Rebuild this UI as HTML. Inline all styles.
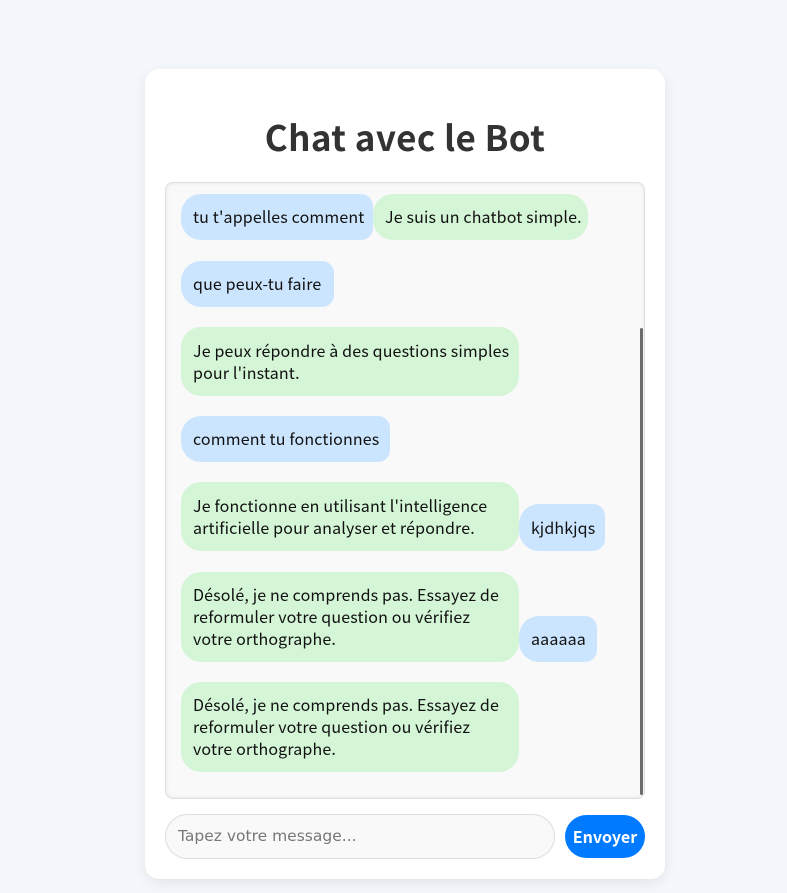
<!DOCTYPE html>
<html><head><meta charset="utf-8"><style>
*{box-sizing:border-box;margin:0;padding:0}
body{width:787px;height:893px;background:#f4f7fb;font-family:"Noto Sans CJK SC","Liberation Sans",sans-serif;position:relative;overflow:hidden}
.card{position:absolute;left:145px;top:69px;width:520px;height:810px;background:#fff;border-radius:14px;box-shadow:0 4px 14px rgba(0,0,0,0.08)}
h1{position:absolute;left:145px;top:111px;width:520px;text-align:center;font-size:35px;font-weight:700;color:#333;line-height:52px;letter-spacing:0.4px}
.box{position:absolute;left:165px;top:182px;width:480px;height:617px;background:#f9f9f9;border:1px solid #ddd;border-radius:8px;box-shadow:inset 0 0 4px rgba(0,0,0,0.08)}
.sb{position:absolute;left:640px;top:328px;width:3px;height:467px;background:#6b6b6b;border-radius:2px}
.b{position:absolute;font-size:16px;line-height:22px;color:#111;padding:0 12px 2px;display:flex;align-items:center;white-space:nowrap;letter-spacing:0.15px}
.u{background:#cce5ff;border-radius:20px 12px 12px 20px}
.g{background:#d4f5d6;border-radius:20px}
.in{position:absolute;left:165px;top:814px;width:390px;height:45px;border:1px solid #ddd;border-radius:23px;background:#f9f9f9;font-family:"DejaVu Sans",sans-serif;font-size:15.5px;color:#777;padding-left:12px;line-height:43px}
.btn{position:absolute;left:565px;top:815px;width:80px;height:43px;background:#007bff;border-radius:22px;color:#fff;font-weight:700;font-size:16px;text-align:center;line-height:42px}
</style></head><body>
<div class="card"></div>
<h1>Chat avec le Bot</h1>
<div class="box"></div>
<div class="b u" style="left:181px;top:194px;width:192px;height:46px">tu t'appelles comment</div>
<div class="b g" style="left:373px;top:194px;width:215px;height:46px">Je suis un chatbot simple.</div>
<div class="b u" style="left:181px;top:261px;width:153px;height:46px">que peux-tu faire</div>
<div class="b g" style="left:181px;top:327px;width:338px;height:69px">Je peux répondre à des questions simples<br>pour l'instant.</div>
<div class="b u" style="left:181px;top:416px;width:209px;height:46px">comment tu fonctionnes</div>
<div class="b g" style="left:181px;top:482px;width:338px;height:69px">Je fonctionne en utilisant l'intelligence<br>artificielle pour analyser et répondre.</div>
<div class="b u" style="left:519px;top:504px;width:86px;height:47px">kjdhkjqs</div>
<div class="b g" style="left:181px;top:572px;width:338px;height:90px">Désolé, je ne comprends pas. Essayez de<br>reformuler votre question ou vérifiez<br>votre orthographe.</div>
<div class="b u" style="left:519px;top:616px;width:78px;height:46px">aaaaaa</div>
<div class="b g" style="left:181px;top:682px;width:338px;height:90px">Désolé, je ne comprends pas. Essayez de<br>reformuler votre question ou vérifiez<br>votre orthographe.</div>
<div class="sb"></div>
<div class="in">Tapez votre message...</div>
<div class="btn">Envoyer</div>
</body></html>
